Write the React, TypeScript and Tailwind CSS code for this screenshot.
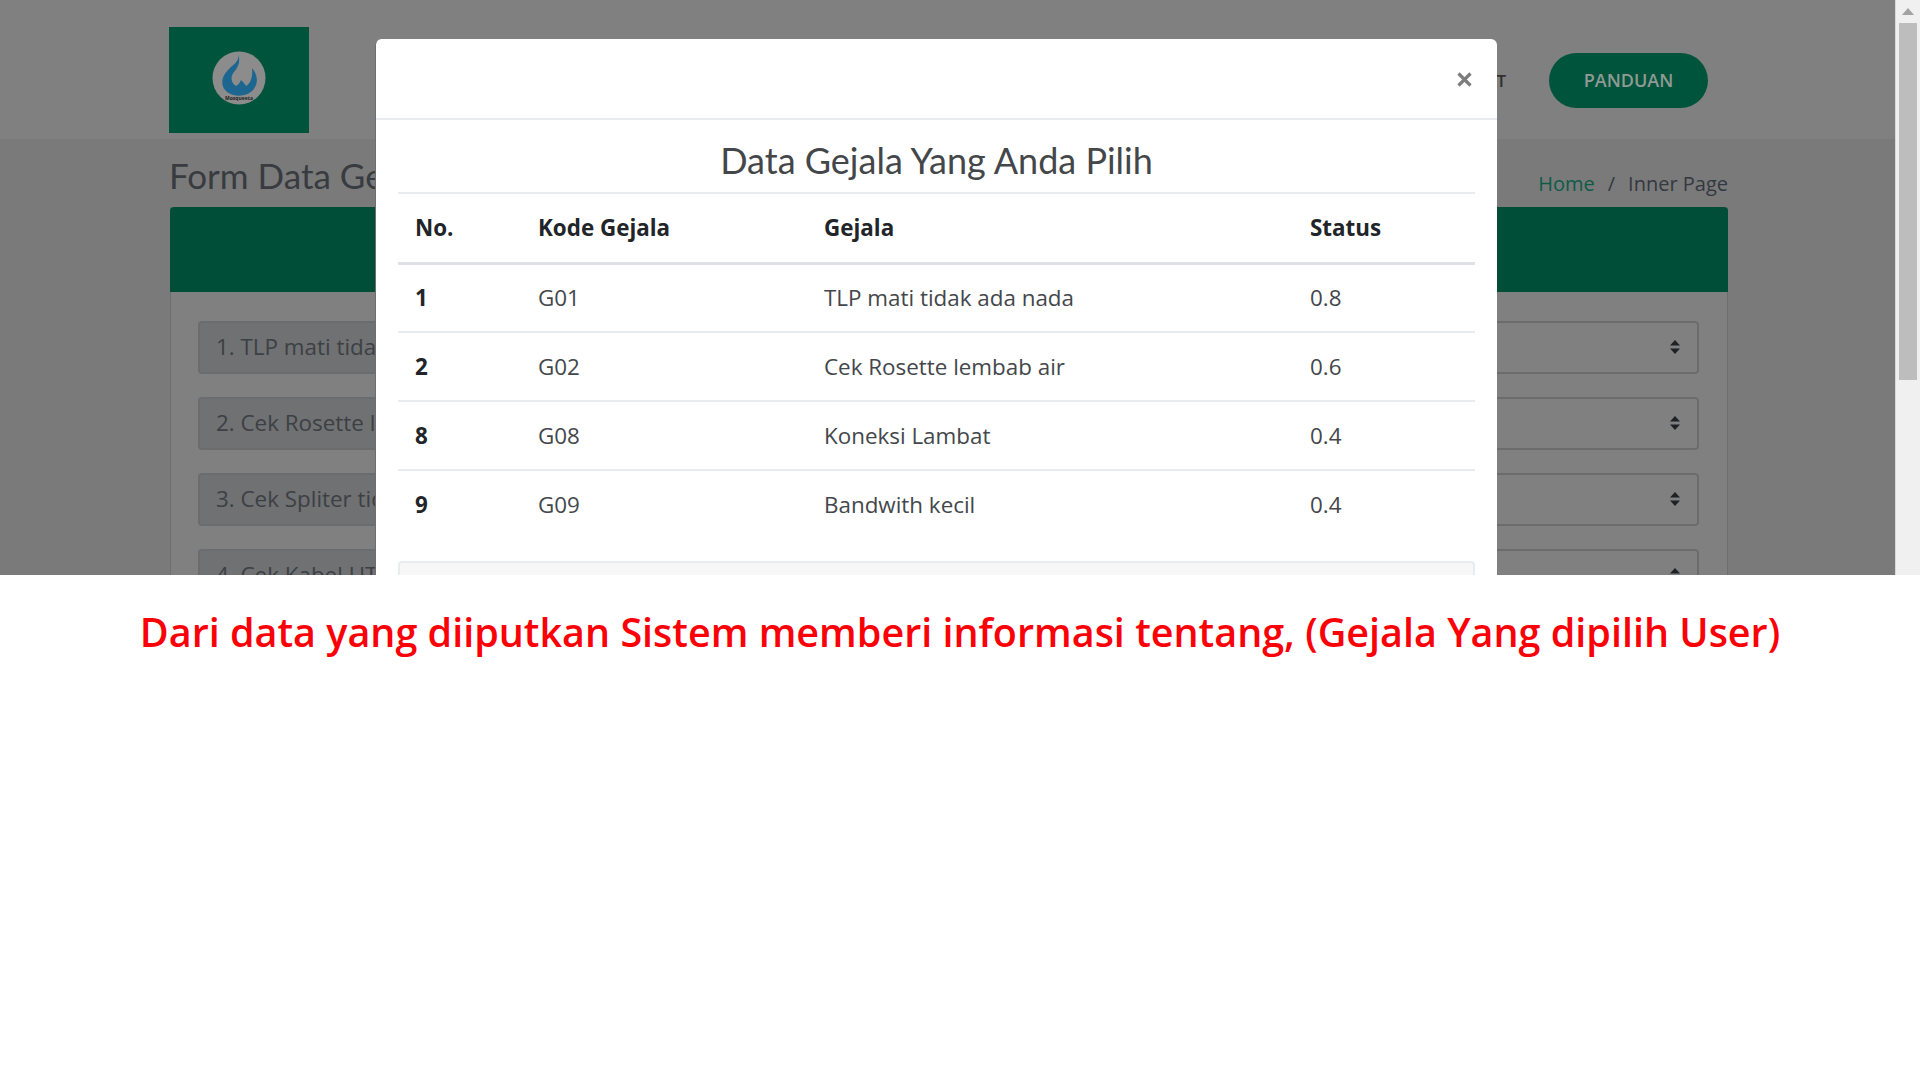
const rows = [
  { no: '1', kode: 'G01', gejala: 'TLP mati tidak ada nada', status: '0.8' },
  { no: '2', kode: 'G02', gejala: 'Cek Rosette lembab air', status: '0.6' },
  { no: '8', kode: 'G08', gejala: 'Koneksi Lambat', status: '0.4' },
  { no: '9', kode: 'G09', gejala: 'Bandwith kecil', status: '0.4' },
];

const selects = ['1. TLP mati tidak ada nada', '2. Cek Rosette lembab air', '3. Cek Spliter tidak normal', '4. Cek Kabel UTP'];

function Logo() {
  return (
    <svg width="54" height="54" viewBox="0 0 54 54">
      <circle cx="27" cy="27" r="26.5" fill="#8c8c8c" />
      <path
        d="M26 3 C28 10 22 13 16 19 C9 26 8 35 15 41 C22 46 34 46 40 40 C47 33 46 24 40 17 C41 25 39 32 34 35 C33 33 31 31 29 29 C28 32 26 34 24 35 C19 32 18 26 22 21 C26 16 29 11 26 3 Z"
        fill="#1c6690"
      />
      <text x="27" y="49" textAnchor="middle" fontSize="5" fontWeight="700" fill="#222" fontFamily="'Open Sans', sans-serif">
        Mosqueeta
      </text>
    </svg>
  );
}

function SelectArrows() {
  return (
    <svg width="12" height="14" viewBox="0 0 12 14" className="text-[#1f2123]">
      <path d="M6 0 L11 5.5 H1 Z M6 14 L1 8.5 H11 Z" fill="currentColor" />
    </svg>
  );
}

export default function App() {
  return (
    <div className="w-[1920px] h-[1080px] bg-white overflow-hidden font-['Open_Sans',sans-serif]">
      <div className="h-[575px] flex overflow-hidden">
        <div className="relative w-[1896px] h-full overflow-hidden bg-[#7a7a7a] border-r border-[#d8d8d8]">
          <header className="h-[139px] bg-[#808080] pl-[169px] pr-[187px] pt-[27px] flex items-start justify-between">
            <div className="w-[140px] h-[106px] bg-[#00543c] flex items-center justify-center pb-[5px]">
              <Logo />
            </div>
            <div className="flex items-center gap-[43px] mt-[26px]">
              <span className="text-[17px] font-semibold text-[#33302c]">ABOUT</span>
              <span className="w-[159px] h-[55px] rounded-full bg-[#00543c] text-[#8f9a94] text-[18px] font-semibold flex items-center justify-center">
                PANDUAN
              </span>
            </div>
          </header>

          <div className="pl-[169px] pr-[167px] h-[68px] flex items-start justify-between">
            <h2 className="mt-[11px] text-[35px] leading-[50px] font-['Lato',sans-serif] text-[#383b3f]">Form Data Gejala</h2>
            <div className="mt-[31px] flex gap-[13px] text-[20px] leading-[28px] text-[#343840]">
              <span className="text-[#0f5a48]">Home</span>
              <span>/</span>
              <span>Inner Page</span>
            </div>
          </div>

          <section className="ml-[170px] w-[1558px] border-x border-[#6e6e6e] bg-[#808080]">
            <div className="h-[85px] -mx-px rounded-t bg-[#004d38]" />
            <div className="pt-[29px] pl-[27px] pr-[28px] flex flex-col gap-[23px]">
              {selects.map((label) => (
                <div
                  key={label}
                  className="h-[53px] shrink-0 rounded border-2 border-[#6b6c6e] bg-[linear-gradient(90deg,#6f7173_50%,#808080_50%)] pl-[16px] pr-[16px] pb-[2px] flex items-center justify-between text-[22.4px] text-[#3d4043]"
                >
                  <span>{label}</span>
                  <SelectArrows />
                </div>
              ))}
            </div>
          </section>

          {/* modal sits over the dimmed page */}
          <div className="absolute left-[375px] top-[39px] w-[1122px] h-[620px] rounded-t-md bg-white border-l border-[#6e6e6e]">
            <div className="h-[81px] border-b-2 border-[#e9ecef] flex items-center justify-end pr-[25px] pt-[2px]">
              <svg width="15" height="15" viewBox="0 0 15 15" className="text-[#7d7d7d]">
                <path d="M1.5 1.5 L13.5 13.5 M13.5 1.5 L1.5 13.5" stroke="currentColor" strokeWidth="3.2" />
              </svg>
            </div>
            <div className="px-[22px]">
              <h3 className="h-[72px] flex items-center justify-center text-[36px] font-['Lato',sans-serif] text-[#44474a] pt-[7px]">
                Data Gejala Yang Anda Pilih
              </h3>
              <table className="w-[1077px] table-fixed border-t-2 border-[#e9ecef] text-[22.4px] text-[#43474b]">
                <thead>
                  <tr className="h-[70px] border-b-[3px] border-[#dee2e6] text-left text-[#212529]">
                    <th className="w-[140px] pl-[17px] pt-[1px] font-bold">No.</th>
                    <th className="w-[286px] pl-0 pt-[1px] font-bold">Kode Gejala</th>
                    <th className="w-[486px] pt-[1px] font-bold">Gejala</th>
                    <th className="pt-[1px] font-bold">Status</th>
                  </tr>
                </thead>
                <tbody>
                  {rows.map((row, i) => (
                    <tr key={row.no} className={i < rows.length - 1 ? 'h-[69px] border-b-2 border-[#e9ecef]' : 'h-[69px]'}>
                      <td className="pl-[17px] font-bold text-[#212529]">{row.no}</td>
                      <td>{row.kode}</td>
                      <td>{row.gejala}</td>
                      <td>{row.status}</td>
                    </tr>
                  ))}
                </tbody>
              </table>
              <div className="mt-[22px] w-[1077px] h-[60px] rounded-t border-2 border-[#e9ecef] bg-[#f7f7f7]" />
            </div>
          </div>
        </div>

        <div className="w-[24px] bg-[#f0f0f0] px-[3px] flex flex-col shrink-0">
          <div className="h-[23px] flex items-center justify-center">
            <svg width="12" height="7" viewBox="0 0 12 7">
              <path d="M6 0 L12 7 H0 Z" fill="#a3a3a3" />
            </svg>
          </div>
          <div className="h-[357px] bg-[#bdbdbd]" />
        </div>
      </div>

      <p className="mt-[27px] text-center text-[39.5px] leading-[60px] font-semibold text-[#fb0007]">
        Dari data yang diiputkan Sistem memberi informasi tentang, (Gejala Yang dipilih User)
      </p>
    </div>
  );
}
